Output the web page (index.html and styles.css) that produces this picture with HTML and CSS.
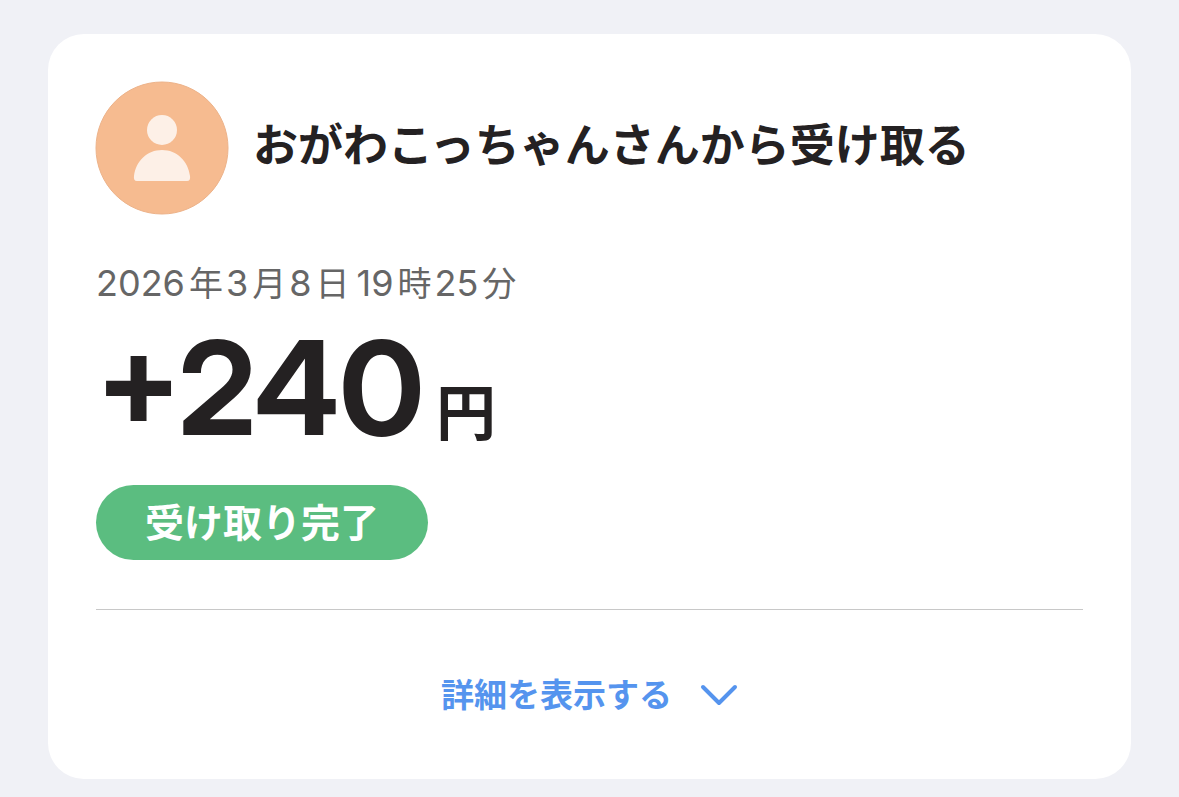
FILE: index.html
```html
<!DOCTYPE html>
<html lang="ja">
<head>
<meta charset="utf-8">
<meta name="viewport" content="width=device-width, initial-scale=1">
<title>受け取り完了</title>
<link rel="stylesheet" href="styles.css">
</head>
<body>
<main class="card">
  <header class="sender">
    <svg class="avatar" viewBox="0 0 134 134" aria-hidden="true">
      <circle cx="67" cy="67" r="66" fill="#f6bb90" stroke="#edb38a" stroke-width="1"/>
      <circle cx="67" cy="49" r="15" fill="#fdf0e7"/>
      <path d="M42 100C39.500 100 38.500 98 39 95C41 80 52 69 67 69C82 69 93 80 95 95C95.500 98 94.500 100 92 100Z" fill="#fdf0e7"/>
    </svg>
    <h1 class="title">おがわこっちゃんさんから受け取る</h1>
  </header>
  <time class="date" datetime="2026-03-08T19:25">
    <span class="part"><span class="num">2026</span>年</span>
    <span class="part"><span class="num">3</span>月</span>
    <span class="part"><span class="num">8</span>日</span>
    <span class="part hour"><span class="num">19</span>時</span>
    <span class="part"><span class="num">25</span>分</span>
  </time>
  <p class="amount"><span class="value">+240</span><span class="unit">円</span></p>
  <p class="status">受け取り完了</p>
  <footer class="more">
    <button class="toggle" type="button">
      <span>詳細を表示する</span>
      <svg class="chevron" viewBox="0 0 38 24" aria-hidden="true"><path d="M3 4L19 20L35 4" fill="none" stroke="#5594ee" stroke-width="4" stroke-linecap="round" stroke-linejoin="round"/></svg>
    </button>
  </footer>
</main>
</body>
</html>
```
FILE: styles.css
```css
* { box-sizing: border-box; }
body {
  margin: 0;
  padding: 34px 48px 18px;
  background: #f0f1f6;
  color: #242122;
  font-family: Inter, "Noto Sans CJK JP", sans-serif;
}
.card {
  padding: 47px 48px 60px;
  border-radius: 36px;
  background: #fff;
}
.sender { display: flex; align-items: center; gap: 24px; }
.avatar { flex: none; width: 134px; height: 134px; margin-left: -1px; }
.title { margin: 0; padding-bottom: 4px; font-size: 45px; line-height: 64px; font-weight: 700; }
.date {
  display: flex;
  align-items: baseline;
  gap: 3px;
  margin-top: 44px;
  color: #666;
  font-size: 34px;
  line-height: 48px;
}
.part { display: flex; align-items: baseline; gap: 4px; }
.num { font-size: 36px; }
.hour { margin-left: 4px; }
.amount {
  display: flex;
  align-items: baseline;
  gap: 12px;
  margin: 12px 0 0;
  font-weight: 700;
}
.value { font-family: "Inter Display", Inter, sans-serif; font-size: 130px; line-height: 136px; }
.unit { font-size: 60px; line-height: 80px; }
.status {
  width: fit-content;
  margin: 29px 0 0;
  padding: 0 49px;
  border-radius: 38px;
  background: #5bbd80;
  color: #fff;
  font-size: 39px;
  line-height: 75px;
  font-weight: 700;
}
.more {
  display: flex;
  justify-content: center;
  margin-top: 49px;
  padding-top: 61px;
  border-top: 1px solid #c8c8c8;
}
.toggle {
  display: flex;
  align-items: center;
  gap: 28px;
  padding: 0;
  border: 0;
  background: none;
  color: #5594ee;
  font: inherit;
  font-size: 33px;
  line-height: 48px;
  font-weight: 700;
  cursor: pointer;
}
.chevron { width: 38px; height: 24px; }
```
